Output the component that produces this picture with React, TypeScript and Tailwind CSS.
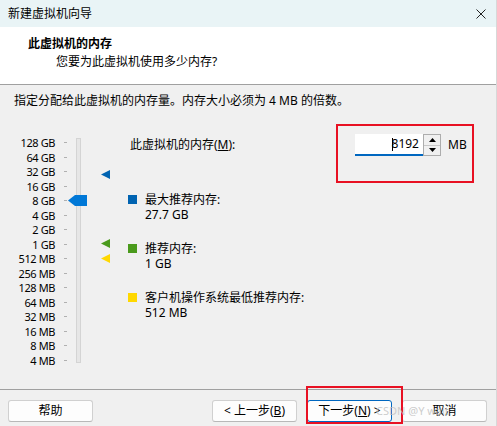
import React from 'react'

const FONT = { fontFamily: '"Noto Sans", "Noto Sans CJK SC", sans-serif' }

const SIZES = [
  '128 GB', '64 GB', '32 GB', '16 GB', '8 GB', '4 GB', '2 GB', '1 GB',
  '512 MB', '256 MB', '128 MB', '64 MB', '32 MB', '16 MB', '8 MB', '4 MB',
]

function Marker({ color, top }: { color: string; top: number }) {
  return (
    <svg className="absolute left-[101px]" style={{ top }} width="10" height="9" viewBox="0 0 10 9">
      <polygon points="0,4.5 9,0 9,9" fill={color} />
    </svg>
  )
}

function Legend({ color, label, value }: { color: string; label: string; value: string }) {
  return (
    <div className="flex text-[12px] leading-[15px] text-black">
      <span className={`w-[9px] h-[9px] mt-[3px] ${color}`} />
      <div className="ml-[8px]">
        <div>{label}</div>
        <div>{value}</div>
      </div>
    </div>
  )
}

function Button({ children, primary }: { children: React.ReactNode; primary?: boolean }) {
  return (
    <button
      className={`w-[85px] h-[22px] rounded-[3px] bg-[#fdfdfd] text-[12px] leading-none text-black flex items-center justify-center border ${
        primary ? 'border-[#0067c0]' : 'border-[#d0d0d0] border-b-[#b8b8b8]'
      }`}
    >
      {children}
    </button>
  )
}

export default function App() {
  return (
    <div className="relative w-[497px] h-[426px] bg-[#f0f0f0] flex flex-col overflow-hidden border-r border-[#d8d8d8]" style={FONT}>
      {/* Title bar */}
      <div className="h-[27px] bg-[#e9f4f6] flex items-center justify-between pl-[8px] pr-[10px]">
        <span className="text-[12px] text-black">新建虚拟机向导</span>
        <svg width="10" height="10" viewBox="0 0 10 10">
          <path d="M0.5 0.5 L9.5 9.5 M9.5 0.5 L0.5 9.5" stroke="#222" strokeWidth="1" />
        </svg>
      </div>

      {/* Header */}
      <div className="h-[58px] bg-white border-b border-[#a0a0a0] pl-[28px] pt-[8px] text-[12px] leading-[18px] text-black">
        <div className="font-bold">此虚拟机的内存</div>
        <div className="pl-[28px]">您要为此虚拟机使用多少内存?</div>
      </div>

      {/* Body */}
      <div className="flex-1 pl-[14px] pt-[8px]">
        <p className="text-[12px] leading-[16px] text-black">
          指定分配给此虚拟机的内存量。内存大小必须为 4 MB 的倍数。
        </p>

        <div className="flex -ml-[14px] mt-[19px]">
          {/* Slider */}
          <div className="relative w-[128px] pt-[7.5px]">
            {SIZES.map((s) => (
              <div key={s} className="flex items-center h-[14.5px]">
                <span className="w-[55px] text-right text-[11px] leading-none tracking-[-0.4px] text-black">{s}</span>
                <span className="ml-[9px] w-[3px] h-px bg-[#b0b0b0]" />
              </div>
            ))}
            <div className="absolute left-[76px] top-[10px] w-[5px] h-[225px] bg-[#e6e6e6] border border-[#d4d4d4]" />
            <svg className="absolute left-[68px] top-[67px]" width="19" height="11" viewBox="0 0 19 11">
              <polygon points="0,5.5 7,0 19,0 19,11 7,11" fill="#0078d7" />
            </svg>
            <Marker color="#0063b1" top={42} />
            <Marker color="#4a9a1c" top={111} />
            <Marker color="#ffd800" top={126} />
          </div>

          {/* Settings */}
          <div className="flex flex-col">
            <div className="flex items-center h-[22px] mt-[6px]">
              <span className="ml-[2px] w-[225px] text-[12px] text-black">
                此虚拟机的内存(<u>M</u>):
              </span>
              <div className="w-[68px] h-[22px] bg-white border-b-2 border-[#0067c0] flex items-center justify-end pr-[4px] text-[12px] text-black">
                <span className="w-px h-[13px] bg-black mr-[-1px]" />
                8192
              </div>
              <div className="w-[18px] h-[22px] flex flex-col border border-[#adadad] bg-[#f0f0f0]">
                <div className="flex-1 flex items-center justify-center border-b border-[#c8c8c8]">
                  <svg width="7" height="4" viewBox="0 0 7 4"><polygon points="3.5,0 7,4 0,4" fill="#000" /></svg>
                </div>
                <div className="flex-1 flex items-center justify-center">
                  <svg width="7" height="4" viewBox="0 0 7 4"><polygon points="0,0 7,0 3.5,4" fill="#000" /></svg>
                </div>
              </div>
              <span className="ml-[7px] text-[12px] text-black">MB</span>
            </div>

            <div className="flex flex-col gap-[19px] mt-[36px]">
              <Legend color="bg-[#0063b1]" label="最大推荐内存:" value="27.7 GB" />
              <Legend color="bg-[#4a9a1c]" label="推荐内存:" value="1 GB" />
              <Legend color="bg-[#ffd800]" label="客户机操作系统最低推荐内存:" value="512 MB" />
            </div>
          </div>
        </div>
      </div>

      {/* Footer */}
      <div className="h-[37px] border-t border-[#a0a0a0] pt-[10px] px-[8px] flex items-start">
        <Button>帮助</Button>
        <div className="ml-auto flex gap-[10px] pr-[1px]">
          <Button>&lt; 上一步(<u>B</u>)</Button>
          <Button primary>下一步(<u>N</u>) &gt;</Button>
          <Button>取消</Button>
        </div>
      </div>

      {/* Annotations */}
      <div className="absolute left-[336px] top-[124px] w-[138px] h-[59px] border-2 border-[#e81123]" />
      <div className="absolute left-[306px] top-[386px] w-[97px] h-[38px] border-2 border-[#e81123]" />
      <span className="absolute left-[376px] top-[403px] text-[11px] text-[#c0c0c0]/80 pointer-events-none">CSDN @Y wait</span>
    </div>
  )
}
